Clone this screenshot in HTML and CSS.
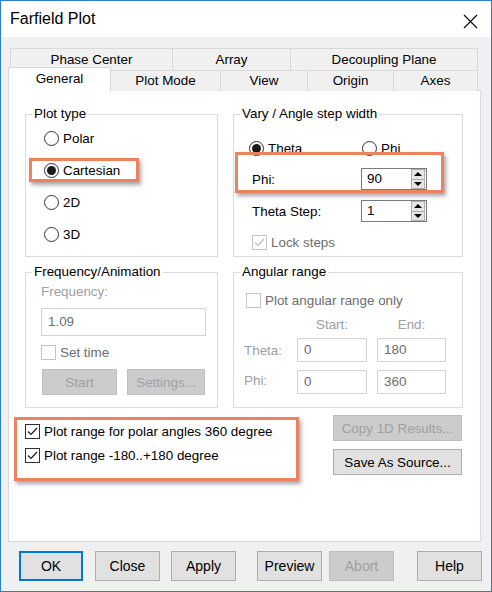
FILE: index.html
```html
<!DOCTYPE html>
<html lang="en">
<head>
    <meta charset="UTF-8">
    <meta name="viewport" content="width=device-width, initial-scale=1.0">
    <title>Farfield Plot</title>
    <link rel="stylesheet" href="styles.css">
</head>
<body>
    <div class="window">
        <div class="titlebar">
            <span class="title">Farfield Plot</span>
            <svg class="close" width="15" height="15" viewBox="0 0 15 15">
                <path d="M1 1L14 14M14 1L1 14" stroke="#000" stroke-width="1.1" fill="none"/>
            </svg>
        </div>

        <div class="tabrow tabrow-back">
            <div class="tab tab-phase">Phase Center</div>
            <div class="tab tab-array">Array</div>
            <div class="tab tab-decoupling">Decoupling Plane</div>
        </div>
        <div class="tabrow tabrow-front">
            <div class="tab tab-general active">General</div>
            <div class="tab tab-plotmode">Plot Mode</div>
            <div class="tab tab-view">View</div>
            <div class="tab tab-origin">Origin</div>
            <div class="tab tab-axes">Axes</div>
        </div>

        <div class="panel">
            <div class="groups">
                <fieldset class="group">
                    <legend>Plot type</legend>
                    <div class="plot-type">
                        <div class="option"><span class="radio"></span>Polar</div>
                        <div class="option"><span class="radio on"></span>Cartesian</div>
                        <div class="option"><span class="radio"></span>2D</div>
                        <div class="option"><span class="radio"></span>3D</div>
                    </div>
                </fieldset>

                <fieldset class="group">
                    <legend>Vary / Angle step width</legend>
                    <div class="vary">
                        <div class="vary-radios">
                            <div class="option option-theta"><span class="radio on"></span>Theta</div>
                            <div class="option"><span class="radio"></span>Phi</div>
                        </div>
                        <div class="spin-row">
                            <span class="spin-label">Phi:</span>
                            <div class="spin">
                                <span class="spin-value">90</span>
                                <span class="spin-buttons"><span class="up"></span><span class="down"></span></span>
                            </div>
                        </div>
                        <div class="spin-row">
                            <span class="spin-label">Theta Step:</span>
                            <div class="spin">
                                <span class="spin-value">1</span>
                                <span class="spin-buttons"><span class="up"></span><span class="down"></span></span>
                            </div>
                        </div>
                        <div class="check-row lock-row disabled">
                            <span class="checkbox off-check">
                                <svg width="13" height="13" viewBox="0 0 13 13"><path d="M2 6.5L5 9.5L11 3" stroke="#bcbcbc" stroke-width="1.2" fill="none"/></svg>
                            </span>
                            Lock steps
                        </div>
                    </div>
                </fieldset>

                <fieldset class="group">
                    <legend>Frequency/Animation</legend>
                    <div class="frequency">
                        <div class="dim-label">Frequency:</div>
                        <div class="textbox freq-box">1.09</div>
                        <div class="check-row disabled"><span class="checkbox off-check"></span>Set time</div>
                        <div class="freq-buttons">
                            <span class="button disabled-button start-btn">Start</span>
                            <span class="button disabled-button settings-btn">Settings...</span>
                        </div>
                    </div>
                </fieldset>

                <fieldset class="group">
                    <legend>Angular range</legend>
                    <div class="angular">
                        <div class="check-row disabled angular-check"><span class="checkbox off-check"></span>Plot angular range only</div>
                        <div class="range-grid">
                            <span></span>
                            <span class="dim-label range-head">Start:</span>
                            <span class="dim-label range-head">End:</span>
                            <span class="dim-label">Theta:</span>
                            <span class="textbox range-box">0</span>
                            <span class="textbox range-box">180</span>
                            <span class="dim-label">Phi:</span>
                            <span class="textbox range-box">0</span>
                            <span class="textbox range-box">360</span>
                        </div>
                    </div>
                </fieldset>
            </div>

            <div class="bottom">
                <div class="checks">
                    <div class="check-row">
                        <span class="checkbox">
                            <svg width="13" height="13" viewBox="0 0 13 13"><path d="M2 6.5L5 9.5L11 3" stroke="#1a1a1a" stroke-width="1.2" fill="none"/></svg>
                        </span>
                        Plot range for polar angles 360 degree
                    </div>
                    <div class="check-row">
                        <span class="checkbox">
                            <svg width="13" height="13" viewBox="0 0 13 13"><path d="M2 6.5L5 9.5L11 3" stroke="#1a1a1a" stroke-width="1.2" fill="none"/></svg>
                        </span>
                        Plot range -180..+180 degree
                    </div>
                </div>
                <div class="side-buttons">
                    <span class="button disabled-button">Copy 1D Results...</span>
                    <span class="button">Save As Source...</span>
                </div>
            </div>
        </div>

        <div class="dialog-buttons">
            <span class="button default-button btn-ok">OK</span>
            <span class="button btn-close">Close</span>
            <span class="button btn-apply">Apply</span>
            <span class="button btn-preview">Preview</span>
            <span class="button disabled-button btn-abort">Abort</span>
            <span class="button btn-help">Help</span>
        </div>

        <!-- annotation boxes drawn over the dialog -->
        <div class="mark mark-cartesian"></div>
        <div class="mark mark-phi"></div>
        <div class="mark mark-range"></div>
    </div>
</body>
</html>
```

FILE: styles.css
```css
* {
    box-sizing: border-box;
}
body {
    margin: 0;
    font-family: "Liberation Sans", Arial, sans-serif;
    font-size: 13.4px;
    color: #000;
    background: #fff;
}
.window {
    position: relative;
    width: 492px;
    height: 592px;
    border: 1px solid #2b7fd0;
    background: #f0f0f0;
}
.titlebar {
    display: flex;
    align-items: center;
    justify-content: space-between;
    height: 36px;
    padding: 0 13px 0 9px;
    background: #fff;
}
.title {
    font-size: 16px;
}
.close {
    margin-top: 4px;
}

/* tabs */
.tabrow {
    display: flex;
}
.tabrow-back {
    height: 22px;
    margin: 11px 0 0 9px;
}
.tabrow-front {
    height: 24px;
    margin: -3px 0 0 7px;
    align-items: flex-end;
}
.tab {
    height: 22px;
    line-height: 21px;
    text-align: center;
    border: 1px solid #d9d9d9;
    border-bottom: none;
    background: #f0f0f0;
    margin-left: -1px;
    white-space: nowrap;
}
.tab:first-child {
    margin-left: 0;
}
.tabrow-front .tab {
    height: 21px;
    line-height: 20px;
}
.tabrow-front .tab.active {
    position: relative;
    z-index: 1;
    height: 24px;
    line-height: 22px;
    background: #fff;
}
.tab-phase { width: 163px; }
.tab-array { width: 119px; }
.tab-decoupling { width: 188px; }
.tab-general { width: 103px; }
.tab-plotmode { width: 111px; }
.tab-view { width: 88px; }
.tab-origin { width: 87px; }
.tab-axes { width: 85px; }

/* panel */
.panel {
    width: 473px;
    height: 452px;
    margin: -1px 0 0 7px;
    padding: 15px 17px 0 16px;
    background: #fff;
    border: 1px solid #d9d9d9;
}
.groups {
    display: grid;
    grid-template-columns: 193px 230px;
    column-gap: 15px;
    row-gap: 7px;
}
.group {
    margin: 0;
    padding: 0;
    min-width: 0;
    border: 1px solid #dcdcdc;
}
.group legend {
    margin-left: 6px;
    padding: 0 2px;
    line-height: 16px;
}
.option {
    display: flex;
    align-items: center;
    gap: 4px;
}
.radio {
    display: inline-flex;
    align-items: center;
    justify-content: center;
    width: 15px;
    height: 15px;
    border: 1px solid #333;
    border-radius: 50%;
    background: #fff;
}
.radio.on::after {
    content: "";
    width: 9px;
    height: 9px;
    border-radius: 50%;
    background: #1a1a1a;
}
.plot-type {
    padding: 0 0 6px 18px;
}
.plot-type .option {
    height: 32px;
}

.vary {
    padding: 16px 0 3px 15px;
}
.vary-radios {
    display: flex;
    height: 20px;
}
.option-theta {
    width: 113px;
}
.spin-row {
    display: flex;
    align-items: center;
    height: 22px;
    margin-top: 10px;
    padding-left: 3px;
}
.spin-label {
    width: 109px;
}
.spin {
    display: flex;
    width: 66px;
    height: 22px;
    border: 1px solid #7a7a7a;
    background: #fff;
}
.spin-value {
    flex: 1;
    padding-left: 5px;
    line-height: 20px;
}
.spin-buttons {
    display: flex;
    flex-direction: column;
    width: 14px;
    margin: 0 1px 0 0;
}
.spin-buttons span {
    flex: 1;
    display: flex;
    align-items: center;
    justify-content: center;
    background: #e6e6e6;
    border: 1px solid #adadad;
}
.spin-buttons .down {
    border-top: none;
}
.spin-buttons .up::after {
    content: "";
    border-left: 4px solid transparent;
    border-right: 4px solid transparent;
    border-bottom: 4px solid #000;
}
.spin-buttons .down::after {
    content: "";
    border-left: 4px solid transparent;
    border-right: 4px solid transparent;
    border-top: 4px solid #000;
}

.check-row {
    display: flex;
    align-items: center;
    gap: 4px;
    height: 20px;
}
.checkbox {
    display: inline-flex;
    align-items: center;
    justify-content: center;
    width: 15px;
    height: 15px;
    border: 1px solid #333;
    background: #fff;
}
.checkbox.off-check {
    border-color: #c4c4c4;
}
.disabled {
    color: #6d6d6d;
}
.lock-row {
    margin-top: 10px;
    padding-left: 3px;
}
.dim-label {
    color: #a0a0a0;
}

.frequency {
    padding: 4px 0 12px 15px;
}
.frequency .dim-label {
    line-height: 16px;
}
.textbox {
    display: block;
    border: 1px solid #d4d4d4;
    background: #fff;
    color: #6d6d6d;
    padding-left: 6px;
}
.freq-box {
    width: 165px;
    height: 28px;
    line-height: 26px;
    margin-top: 8px;
}
.frequency .check-row {
    height: 17px;
    margin-top: 8px;
}
.freq-buttons {
    display: flex;
    gap: 10px;
    margin: 8px 0 0 1px;
}
.start-btn {
    width: 75px;
    height: 25px;
}
.settings-btn {
    width: 78px;
    height: 25px;
}

.angular {
    padding: 10px 0 10px 10px;
}
.angular-check {
    padding-left: 2px;
}
.range-grid {
    display: grid;
    grid-template-columns: 43px 70px 69px;
    grid-template-rows: 16px 24px 24px;
    column-gap: 10px;
    row-gap: 6px;
    align-items: center;
    margin-top: 6px;
}
.range-grid .textbox:nth-child(n+7) {
    margin-top: 4px;
}
.range-head {
    text-align: center;
}
.range-box {
    height: 24px;
    line-height: 22px;
}

/* buttons */
.button {
    display: inline-flex;
    align-items: center;
    justify-content: center;
    height: 26px;
    background: #e1e1e1;
    border: 1px solid #adadad;
    white-space: nowrap;
}
.disabled-button {
    background: #cccccc;
    border-color: #bfbfbf;
    color: #a0a0a0;
}

.bottom {
    display: flex;
    justify-content: space-between;
    align-items: flex-start;
    margin-top: 7px;
}
.checks {
    display: flex;
    flex-direction: column;
    gap: 4px;
    margin-top: 6px;
}
.side-buttons {
    display: flex;
    flex-direction: column;
    gap: 8px;
    width: 129px;
    margin-right: 1px;
}

.dialog-buttons {
    display: flex;
    margin: 9px 0 0 18px;
    font-size: 14px;
}
.dialog-buttons .button {
    width: 65px;
    height: 30px;
}
.dialog-buttons .default-button {
    width: 64px;
    border: 2px solid #0078d7;
}
.btn-close { margin-left: 12px; }
.btn-apply { margin-left: 11px; }
.btn-preview { margin-left: 21px; }
.btn-abort { margin-left: 7px; }
.btn-help { margin-left: 23px; }

/* orange annotation frames */
.mark {
    position: absolute;
    border: 3px solid #ee8160;
    box-shadow: 2px 3px 4px rgba(0, 0, 0, 0.35);
}
.mark-cartesian {
    left: 28px;
    top: 157px;
    width: 110px;
    height: 24px;
}
.mark-phi {
    left: 234px;
    top: 151px;
    width: 209px;
    height: 41px;
}
.mark-range {
    left: 13px;
    top: 416px;
    width: 285px;
    height: 64px;
}
```
